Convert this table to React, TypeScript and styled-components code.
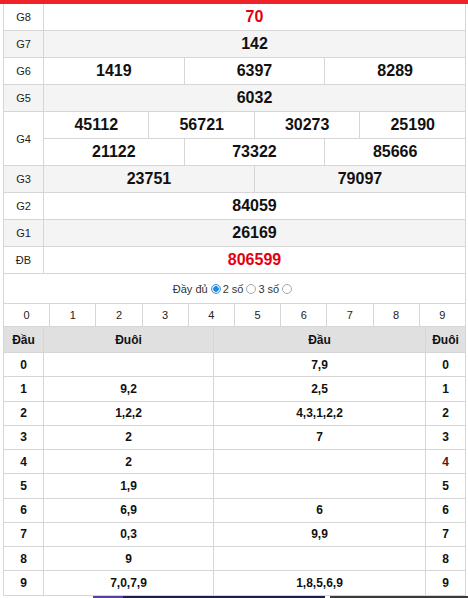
import React from "react";
import styled, { createGlobalStyle } from "styled-components";

const Global = createGlobalStyle`
  html, body { margin: 0; padding: 0; background: #fff; }
  body { font-family: "Liberation Sans", Arial, sans-serif; color: #000; }
`;

const BORDER = "#d6d6d6";

const TopBar = styled.div`
  height: 4px;
  background: #ee2229;
`;

const Page = styled.div`
  padding-left: 3px;
  width: 463px;
`;

const Frame = styled.div`
  border-left: 1px solid ${BORDER};
  border-right: 1px solid ${BORDER};
  box-sizing: border-box;
`;

const Table = styled.table`
  border-collapse: collapse;
  table-layout: fixed;
  margin-left: -1px;
  width: calc(100% + 2px);
`;

const PrizeRow = styled.tr<{ $alt?: boolean }>`
  background: ${(p) => (p.$alt ? "#f4f4f4" : "#fff")};
`;

const Label = styled.td`
  border: 1px solid ${BORDER};
  border-top: none;
  text-align: center;
  font-size: 11px;
  color: #222;
  padding: 0;
  height: 26px;
`;

const Num = styled.td<{ $red?: boolean }>`
  border: 1px solid ${BORDER};
  border-top: none;
  text-align: center;
  font-size: 16px;
  font-weight: bold;
  padding: 0;
  height: 26px;
  color: ${(p) => (p.$red ? "#e3000f" : "#111")};
`;

const RadioBar = styled.div`
  height: 29px;
  display: flex;
  align-items: center;
  justify-content: center;
  font-size: 11px;
  color: #333;
  border-bottom: 1px solid ${BORDER};
  padding-right: 2px;
`;

const RadioOpt = styled.span<{ $checked?: boolean }>`
  display: inline-block;
  width: 8px;
  height: 8px;
  border-radius: 50%;
  margin: 0 2px 0 3px;
  border: 1px solid ${(p) => (p.$checked ? "#4a9be0" : "#a8a8a8")};
  background: ${(p) =>
    p.$checked
      ? "radial-gradient(circle, #1e88e5 0 2.5px, #cfe6fa 3px)"
      : "#fff"};
`;

const DigitCell = styled.td`
  border-right: 1px solid ${BORDER};
  border-left: 1px solid ${BORDER};
  text-align: center;
  font-size: 11px;
  color: #222;
  height: 22px;
  padding: 0;
`;

const HeadRow = styled.tr`
  background: #e0e0e0;
`;

const HeadCell = styled.th`
  border: 1px solid ${BORDER};
  font-size: 12px;
  font-weight: bold;
  height: 25px;
  padding: 0;
  color: #111;
`;

const LotoRow = styled.tr`
  height: 24.25px;
`;

const LotoCell = styled.td<{ $maroon?: boolean }>`
  border: 1px solid ${BORDER};
  text-align: center;
  font-size: 12px;
  font-weight: bold;
  padding: 0;
  color: ${(p) => (p.$maroon ? "#6b1010" : "#111")};
`;

const AdStrip = styled.div`
  display: flex;
  height: 4px;
`;

const AdPart = styled.div<{ $w: number; $c: string }>`
  width: ${(p) => p.$w}px;
  background: ${(p) => p.$c};
`;

type Prize = { label: string; rows: string[][]; red?: boolean };

const prizes: Prize[] = [
  { label: "G8", rows: [["70"]], red: true },
  { label: "G7", rows: [["142"]] },
  { label: "G6", rows: [["1419", "6397", "8289"]] },
  { label: "G5", rows: [["6032"]] },
  { label: "G4", rows: [["45112", "56721", "30273", "25190"], ["21122", "73322", "85666"]] },
  { label: "G3", rows: [["23751", "79097"]] },
  { label: "G2", rows: [["84059"]] },
  { label: "G1", rows: [["26169"]] },
  { label: "ĐB", rows: [["806599"]], red: true },
];

const loto: [string, string, string, string][] = [
  ["0", "", "7,9", "0"],
  ["1", "9,2", "2,5", "1"],
  ["2", "1,2,2", "4,3,1,2,2", "2"],
  ["3", "2", "7", "3"],
  ["4", "2", "", "4"],
  ["5", "1,9", "", "5"],
  ["6", "6,9", "6", "6"],
  ["7", "0,3", "9,9", "7"],
  ["8", "9", "", "8"],
  ["9", "7,0,7,9", "1,8,5,6,9", "9"],
];

export default function App() {
  return (
    <>
      <Global />
      <TopBar />
      <Page>
        <Frame>
          <Table>
            <colgroup>
              <col style={{ width: 40 }} />
              {Array.from({ length: 12 }).map((_, i) => (
                <col key={i} />
              ))}
            </colgroup>
            <tbody>
              {prizes.map((p, pi) =>
                p.rows.map((r, ri) => (
                  <PrizeRow key={p.label + ri} $alt={pi % 2 === 1}>
                    {ri === 0 && <Label rowSpan={p.rows.length}>{p.label}</Label>}
                    {r.map((n) => (
                      <Num key={n} colSpan={12 / r.length} $red={p.red}>
                        {n}
                      </Num>
                    ))}
                  </PrizeRow>
                ))
              )}
            </tbody>
          </Table>
          <RadioBar>
            Đầy đủ<RadioOpt $checked />2 số<RadioOpt />3 số<RadioOpt />
          </RadioBar>
          <Table>
            <tbody>
              <tr>
                {Array.from({ length: 10 }).map((_, i) => (
                  <DigitCell key={i}>{i}</DigitCell>
                ))}
              </tr>
            </tbody>
          </Table>
          <Table>
            <colgroup>
              <col style={{ width: 40 }} />
              <col style={{ width: 170 }} />
              <col style={{ width: 212 }} />
              <col style={{ width: 40 }} />
            </colgroup>
            <thead>
              <HeadRow>
                <HeadCell>Đầu</HeadCell>
                <HeadCell>Đuôi</HeadCell>
                <HeadCell>Đầu</HeadCell>
                <HeadCell>Đuôi</HeadCell>
              </HeadRow>
            </thead>
            <tbody>
              {loto.map((r) => (
                <LotoRow key={r[0]}>
                  <LotoCell>{r[0]}</LotoCell>
                  <LotoCell>{r[1]}</LotoCell>
                  <LotoCell>{r[2]}</LotoCell>
                  <LotoCell $maroon={r[3] === "4"}>{r[3]}</LotoCell>
                </LotoRow>
              ))}
            </tbody>
          </Table>
        </Frame>
      </Page>
      <AdStrip>
        <AdPart $w={93} $c="#fff" />
        <AdPart $w={30} $c="#5b3fa0" />
        <AdPart $w={202} $c="#1c1f4a" />
        <AdPart $w={5} $c="#fff" />
        <AdPart $w={138} $c="#3a3a3a" />
      </AdStrip>
    </>
  );
}
